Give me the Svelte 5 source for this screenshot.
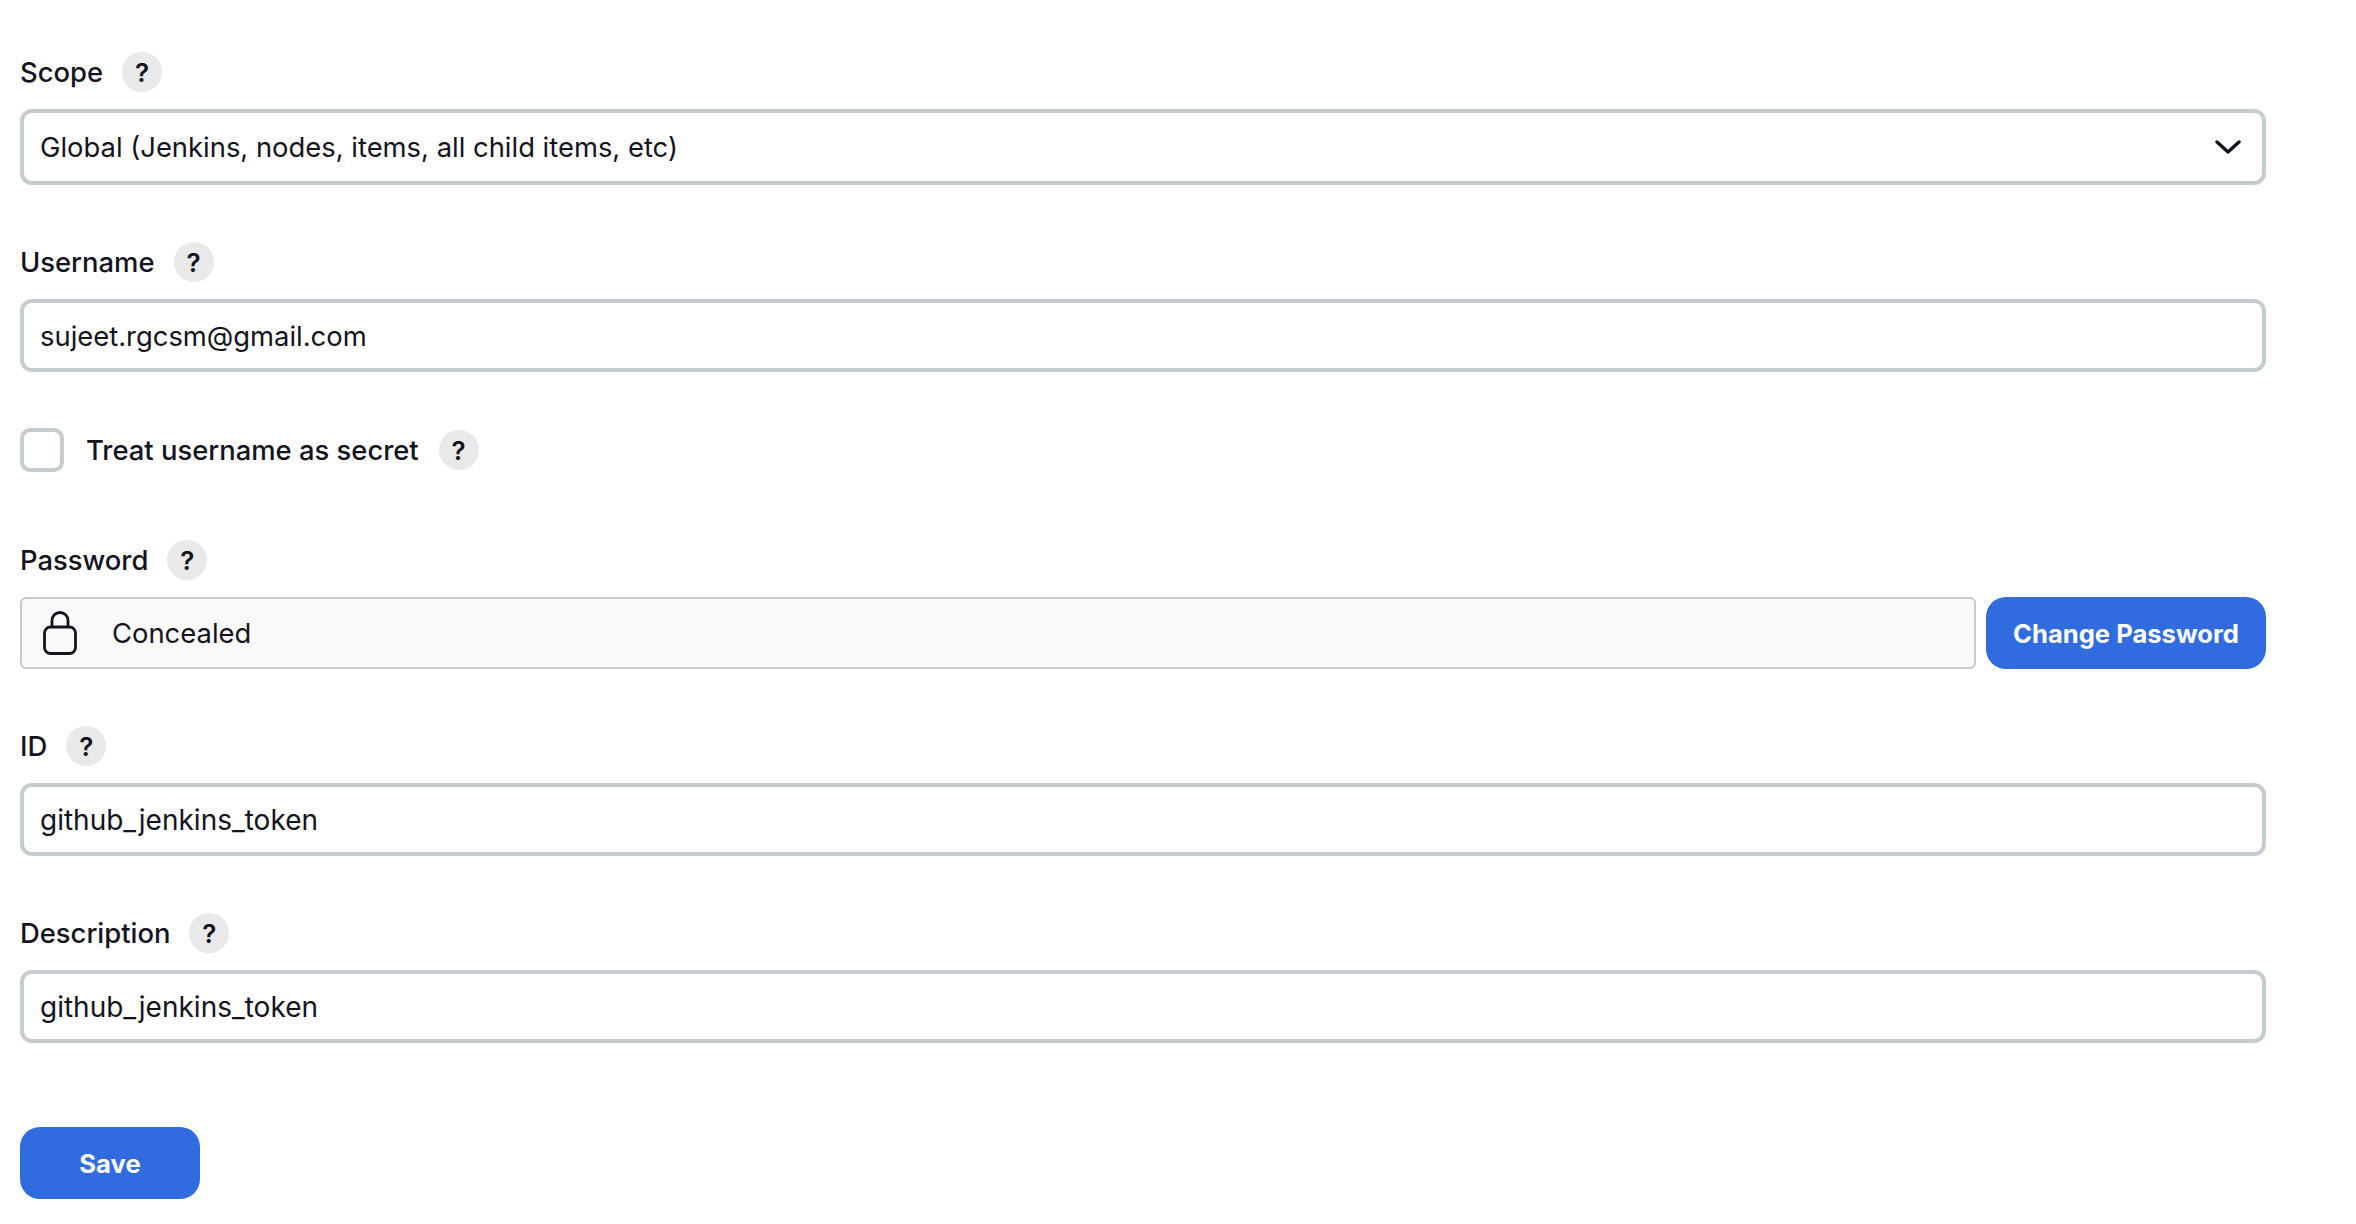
<script>
  let username = 'sujeet.rgcsm@gmail.com';
  let credId = 'github_jenkins_token';
  let description = 'github_jenkins_token';
</script>

{#snippet help()}
  <span class="help">?</span>
{/snippet}

<form class="form" onsubmit={(e) => e.preventDefault()}>
  <div class="group">
    <div class="label-row"><span class="label">Scope</span>{@render help()}</div>
    <div class="select-wrap">
      <select class="field select">
        <option>Global (Jenkins, nodes, items, all child items, etc)</option>
      </select>
      <svg class="chevron" viewBox="0 0 26 16" width="26" height="16" aria-hidden="true">
        <path d="M2 3l11 10L24 3" fill="none" stroke="#14141f" stroke-width="3.4" stroke-linecap="round" stroke-linejoin="round" />
      </svg>
    </div>
  </div>

  <div class="group">
    <div class="label-row"><span class="label">Username</span>{@render help()}</div>
    <input class="field" bind:value={username} />
  </div>

  <div class="group check-group">
    <input class="checkbox" type="checkbox" />
    <span class="label check-label">Treat username as secret</span>
    {@render help()}
  </div>

  <div class="group">
    <div class="label-row"><span class="label">Password</span>{@render help()}</div>
    <div class="password-row">
      <div class="concealed">
        <svg viewBox="0 0 34 44" width="34" height="44" aria-hidden="true">
          <rect x="1.5" y="16" width="31" height="26.5" rx="6" fill="none" stroke="#14141f" stroke-width="2.8" />
          <path d="M9 16V9.5a8 8 0 0 1 16 0V16" fill="none" stroke="#14141f" stroke-width="2.8" />
        </svg>
        <span>Concealed</span>
      </div>
      <button class="btn change" type="button">Change Password</button>
    </div>
  </div>

  <div class="group">
    <div class="label-row"><span class="label">ID</span>{@render help()}</div>
    <input class="field token" bind:value={credId} />
  </div>

  <div class="group">
    <div class="label-row"><span class="label">Description</span>{@render help()}</div>
    <input class="field token" bind:value={description} />
  </div>

  <button class="btn save" type="submit">Save</button>
</form>

<style>
  :global(body) {
    background: #fff;
  }

  .form {
    width: 2246px;
    padding: 52px 0 0 20px;
    font-family: Inter, sans-serif;
    font-size: 27.4px;
    color: #14141f;
  }

  .group {
    margin-bottom: 57px;
  }

  .label-row {
    display: flex;
    align-items: center;
    height: 40px;
    margin-bottom: 17px;
  }

  .label {
    font-weight: 500;
    line-height: 40px;
  }

  .help {
    display: flex;
    align-items: center;
    justify-content: center;
    flex: none;
    width: 40px;
    height: 40px;
    margin-left: 19px;
    border-radius: 50%;
    background: #e9e9ea;
    font-size: 26px;
    font-weight: 600;
  }

  .field {
    display: block;
    box-sizing: border-box;
    width: 100%;
    height: 73px;
    padding: 0 16px;
    border: 4px solid #c5cccf;
    border-radius: 12px;
    background: #fff;
    font: inherit;
    color: inherit;
    outline: none;
  }

  .token {
    font-size: 28px;
  }

  .select-wrap {
    position: relative;
  }

  .select {
    height: 76px;
    appearance: none;
  }

  .chevron {
    position: absolute;
    right: 25px;
    top: 30px;
    pointer-events: none;
  }

  .check-group {
    display: flex;
    align-items: center;
    height: 44px;
    margin-top: -1px;
    margin-bottom: 68px;
  }

  .check-group .help {
    margin-left: 20px;
  }

  .checkbox {
    appearance: none;
    box-sizing: border-box;
    flex: none;
    width: 44px;
    height: 44px;
    margin: 0;
    border: 4px solid #c5cccf;
    border-radius: 10px;
    background: #fff;
  }

  .check-label {
    margin-left: 22px;
  }

  .password-row {
    display: flex;
    gap: 10px;
  }

  .concealed {
    display: flex;
    flex: 1;
    align-items: center;
    gap: 35px;
    box-sizing: border-box;
    height: 72px;
    padding: 0 21px;
    border: 2px solid #c5cccf;
    border-radius: 6px;
    background: #f9f9f9;
  }

  .btn {
    height: 72px;
    border: none;
    border-radius: 20px;
    background: #306cdf;
    color: #fff;
    font: inherit;
    font-size: 25.6px;
    font-weight: 700;
  }

  .change {
    width: 280px;
  }

  .save {
    width: 180px;
    margin-top: 27px;
  }
</style>
